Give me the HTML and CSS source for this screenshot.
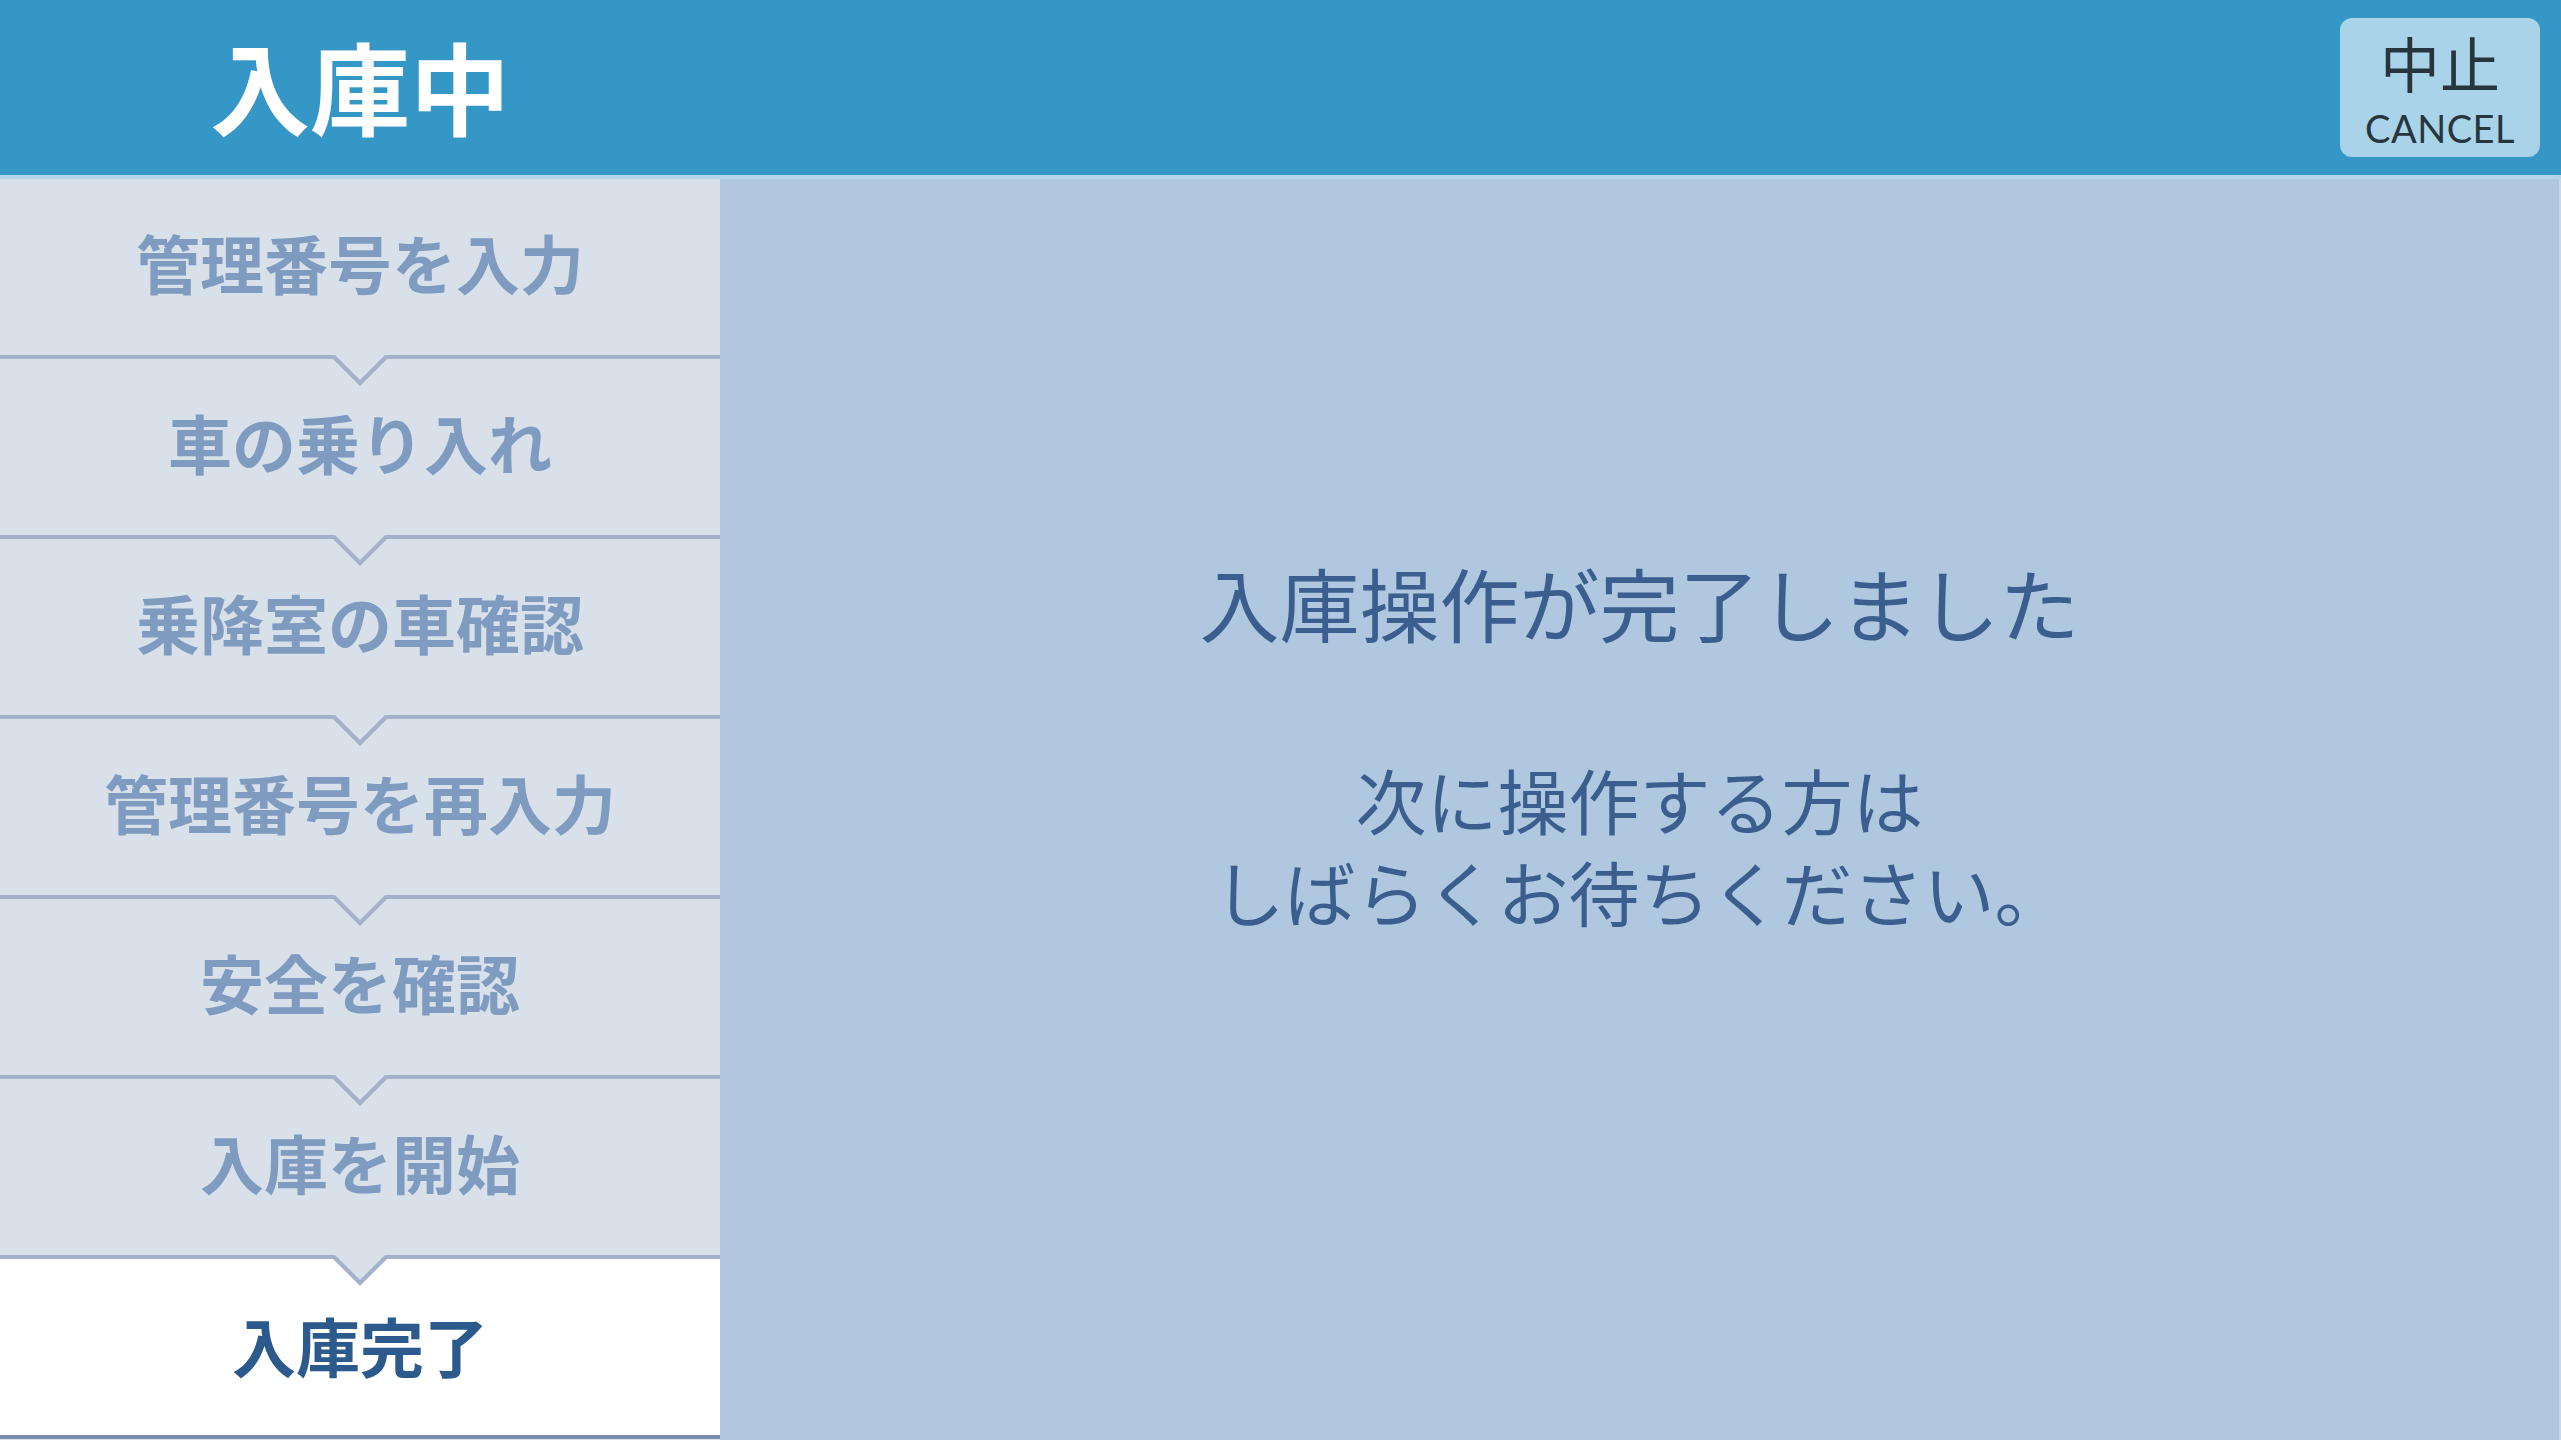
FILE: index.html
```html
<!DOCTYPE html>
<html lang="ja">
<head>
<meta charset="utf-8">
<title>入庫中</title>
<link rel="stylesheet" href="styles.css">
</head>
<body>
<div class="screen">
  <header class="topbar">
    <div class="title">入庫中</div>
    <button class="cancel">
      <span class="cancel-jp">中止</span>
      <span class="cancel-en">CANCEL</span>
    </button>
  </header>
  <div class="body">
    <nav class="steps">
      <div class="step">管理番号を入力</div>
      <div class="step">車の乗り入れ</div>
      <div class="step">乗降室の車確認</div>
      <div class="step">管理番号を再入力</div>
      <div class="step">安全を確認</div>
      <div class="step">入庫を開始</div>
      <div class="step active">入庫完了</div>
    </nav>
    <main class="content">
      <div class="headline">入庫操作が完了しました</div>
      <p class="message">次に操作する方は<br>しばらくお待ちください。</p>
    </main>
  </div>
</div>
</body>
</html>
```

FILE: styles.css
```css
* { box-sizing: border-box; }
html, body {
  margin: 0;
  padding: 0;
  width: 2561px;
  height: 1440px;
  overflow: hidden;
  background: #afc8e0;
  font-family: "Noto Sans CJK JP", "Noto Sans", sans-serif;
}
.screen {
  width: 2561px;
  height: 1440px;
  display: flex;
  flex-direction: column;
}
.topbar {
  height: 179px;
  flex: none;
  background: #3597c5;
  border-bottom: 4px solid #b4d4e9;
  display: flex;
  align-items: center;
  justify-content: space-between;
  padding-right: 21px;
}
.title {
  width: 720px;
  text-align: center;
  color: #ffffff;
  font-size: 100px;
  font-weight: 700;
  line-height: 100px;
  margin-bottom: 6px;
}
.cancel {
  width: 200px;
  height: 139px;
  margin: 0;
  border: none;
  border-radius: 12px;
  background: #a9d3e8;
  display: flex;
  flex-direction: column;
  align-items: center;
  padding: 0;
  color: #27363e;
  font-family: "Noto Sans CJK JP", sans-serif;
}
.cancel-jp {
  font-size: 60px;
  line-height: normal;
  font-weight: 400;
}
.cancel-en {
  margin-top: 0;
  font-family: Lato, "Open Sans", sans-serif;
  font-size: 38px;
  line-height: normal;
  font-weight: 400;
  letter-spacing: 0.5px;
}
.body {
  flex: 1;
  display: flex;
  min-height: 0;
}
.steps {
  width: 720px;
  flex: none;
  display: flex;
  flex-direction: column;
  background: #d8e0ea;
}
.step {
  position: relative;
  height: 180px;
  flex: none;
  display: flex;
  align-items: center;
  justify-content: center;
  background: #d8e0ea;
  border-bottom: 4px solid #a5b0cb;
  color: #7f9cc0;
  font-size: 64px;
  font-weight: 700;
  line-height: 64px;
  padding-bottom: 12px;
}
.step::before,
.step::after {
  content: "";
  position: absolute;
  left: 50%;
  width: 0;
  height: 0;
  z-index: 1;
}
.step::before {
  bottom: -31px;
  margin-left: -27px;
  border-left: 27px solid transparent;
  border-right: 27px solid transparent;
  border-top: 27px solid #a5b0cb;
}
.step::after {
  bottom: -25px;
  margin-left: -27px;
  border-left: 27px solid transparent;
  border-right: 27px solid transparent;
  border-top: 27px solid #d8e0ea;
}
.step.active {
  background: #ffffff;
  color: #2c5a8c;
  border-bottom-color: #7b8fae;
  padding-bottom: 6px;
  padding-top: 0;
}
.step.active::before,
.step.active::after {
  display: none;
}
.content {
  flex: 1;
  display: flex;
  flex-direction: column;
  align-items: center;
  padding-top: 372px;
  background: #afc8e0;
  border-right: 2px solid #c9d6e4;
  color: #3b5e8e;
}
.headline {
  font-size: 80px;
  line-height: 100px;
  font-weight: 400;
}
.message {
  margin: 101px 0 0 0;
  font-size: 71px;
  line-height: 92px;
  font-weight: 400;
  text-align: center;
}
```
